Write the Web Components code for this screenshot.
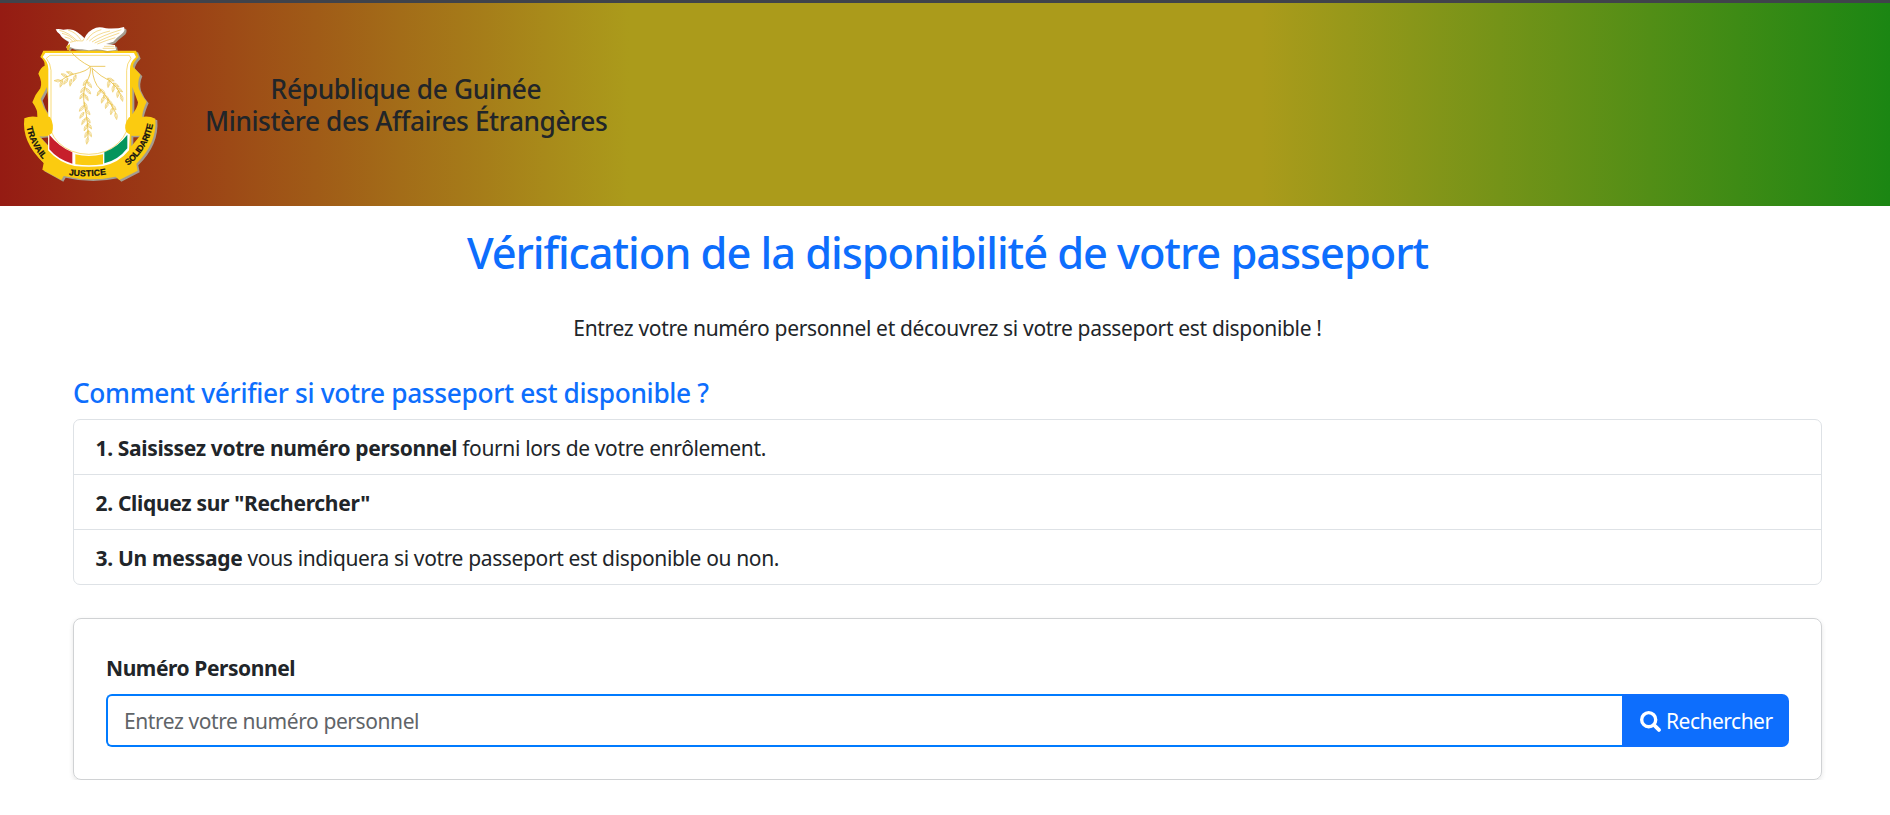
<!DOCTYPE html>
<html lang="fr">
<head>
<meta charset="utf-8">
<title>Vérification de passeport</title>
<style>
html,body{margin:0;background:#fff}
body{font-family:"Noto Sans","Open Sans",sans-serif;font-size:21px;line-height:32.4px;color:#212529}
</style>
</head>
<body>
<passport-page></passport-page>
<script>
const define = (name, html) => {
  const tpl = document.createElement('template');
  tpl.innerHTML = html;
  customElements.define(name, class extends HTMLElement {
    constructor() {
      super();
      this.attachShadow({ mode: 'open' }).appendChild(tpl.content.cloneNode(true));
    }
  });
};

/* One leaf and the sprigs built from it */
const leaf = (x, y, a, s = 1) =>
  `<path transform="translate(${x} ${y}) rotate(${a}) scale(${s})" d="M0 0Q-8 9 0 22Q8 9 0 0M0 2V18"/>`;
const leaves = [
  [220,224,110],[228,225,20],[214,238,10],[203,232,115],[204,236,35],[184,243,90],[188,242,20],
  [262,240,35],[262,246,-35],[256,262,40],[258,266,-40],[252,280,35],[254,284,-30],[252,308,-25],[252,318,40],[256,328,-40],[252,338,35],
  [258,352,-35],[256,356,30],[262,370,-35],[262,374,25],[264,392,-28],[264,394,25],[264,412,10],
  [300,268,-45],[302,270,30],[310,286,-50],[312,290,20],[322,300,-45],[324,306,20],[334,314,-40],[338,324,15],[346,338,-10],
  [322,236,-70],[328,242,10],[338,250,-60],[342,256,10],[350,264,-55],[356,272,10],[362,284,-15]
].map(l => leaf(...l)).join('');

define('guinea-emblem', `
<style>
:host{display:block;width:140px;height:165px}
svg{display:block;width:100%;height:100%;overflow:visible}
text{font:bold 26px "Liberation Sans",Arial,sans-serif;fill:#111;stroke:#111;stroke-width:.7px}
</style>
<svg viewBox="60 70 420 495" role="img" aria-label="Armoiries">
  <defs>
    <path id="rib" fill-rule="evenodd" d="M130 153H408L416 172Q398 190 399 202Q406 208 421 225Q411 248 417 268Q426 290 440 306Q432 322 424 352Q448 348 466 357Q472 430 409 492L413 513L358 541L347 531Q270 548 191 529L184 541L127 510L131 490Q64 428 73 356Q92 347 114 352Q113 330 97 308Q104 286 121 266Q128 248 115 222Q122 202 134 198Q136 184 121 172Z
      M141 262L122 298Q128 322 144 344V300ZM118 410L144 438V408ZM397 262V344Q413 324 414 308ZM394 408V440L420 408Z"/>
    <g id="bird">
      <path d="M207 126Q184 116 180 104Q170 98 167 89Q176 87 190 90Q218 86 232 98Q244 106 253 116Q264 92 288 84Q300 80 318 86Q352 88 372 82Q378 94 364 104Q348 116 340 126L318 133L345 136L348 151L322 154Q300 150 290 149Q266 154 246 149Q224 150 210 142L203 150L199 143L204 134Z"/>
    </g>
    <path id="t1" d="M80 382Q90 438 137 488"/>
    <path id="t2" d="M206 527Q264 534 330 523"/>
    <path id="t3" d="M384 498Q448 446 461 364"/>
  </defs>
  <g fill="#a59d90" transform="translate(6 5)"><use href="#rib"/><use href="#bird"/></g>
  <use href="#rib" fill="#fbcb10"/>
  <path fill="#fff" d="M136 160H402L408 172Q390 188 390 208V398L387 452Q356 490 309 499Q266 504 224 499Q178 490 144 452L145 398V208Q145 186 128 172Z"/>
  <path fill="none" stroke="#f7d45f" stroke-width="2.5" d="M150 167H388L393 176Q380 192 380 212V394Q362 434 320 454Q266 474 214 454Q168 434 153 394V212Q152 192 139 176Z"/>
  <path fill="#fbcb10" d="M112 335Q130 350 150 352Q164 376 156 400Q136 418 112 406ZM427 335Q410 352 387 353Q370 376 378 396Q400 416 427 402Z"/>
  <path fill="#c71f2b" d="M148 405Q176 440 217 458V492Q174 480 148 449Z"/>
  <path fill="#fbcb10" d="M226 464Q266 474 309 464V494Q266 500 226 494Z"/>
  <path fill="#04955c" d="M313 458Q354 442 382 405V446Q354 482 313 491Z"/>
  <g fill="none" stroke="#e9c34e" stroke-width="1.7">
    <path stroke-width="2.6" d="M207 150Q236 184 270 200H316M270 200Q266 214 218 224Q196 232 180 244M270 200Q276 220 258 250Q246 284 254 320Q264 360 264 412M276 204Q280 250 300 268Q322 290 346 338M276 206Q304 232 330 244Q352 262 362 284"/>
    ${leaves}
  </g>
  <use href="#bird" fill="#fff"/>
  <g fill="none" stroke="#ecc24c" stroke-width="1.8">
    <path d="M178 92Q206 98 232 124M186 101Q210 106 226 124M194 112Q210 114 218 124M204 91Q228 98 242 120M260 122Q276 96 304 90M268 124Q290 102 330 94M276 127Q304 108 364 90M284 130Q316 114 358 100M292 133Q318 122 346 114M312 140H343M308 146H344M210 128Q230 120 248 124M253 116L248 124"/>
  </g>
  <path fill="#e3b41c" d="M199 140L210 133V139L207 152H202ZM308 154Q322 166 338 155Z"/>
  <text><textPath href="#t1" textLength="110">TRAVAIL</textPath></text>
  <text><textPath href="#t2" textLength="113">JUSTICE</textPath></text>
  <text><textPath href="#t3" textLength="148">SOLIDARITE</textPath></text>
</svg>`);

define('site-header', `
<style>
:host{display:flex;align-items:center;box-sizing:border-box;height:206px;padding-left:20px;border-top:3px solid #40434b;
 background:linear-gradient(to right,#951b13 0%,#ab9b1b 33.3%,#ab9b1b 66.7%,#1b8613 100%)}
h5{margin:1px 0 0 45px;width:402px;text-align:center;white-space:nowrap;font-size:26.3px;line-height:32.4px;font-weight:500}
guinea-emblem{margin-top:1px}
span{display:block}
.a{letter-spacing:-.33px}.b{letter-spacing:-.43px}
</style>
<guinea-emblem></guinea-emblem>
<h5><span class="a">République de Guinée</span><span class="b">Ministère des Affaires Étrangères</span></h5>`);

define('step-list', `
<style>
:host{display:block;border:1px solid #dee2e6;border-radius:7px;overflow:hidden}
</style><slot></slot>`);

define('step-item', `
<style>
:host{display:block;box-sizing:border-box;height:55px;padding:12px 21.5px 0;border-bottom:1px solid #dee2e6;letter-spacing:-.36px;white-space:nowrap}
:host(:last-child){border-bottom:0;height:54px}
b{font-weight:700;letter-spacing:var(--lead,-.35px)}
</style><b><slot name="lead"></slot></b> <slot></slot>`);

define('search-button', `
<style>
:host{display:block;flex:none;width:167px}
button{display:flex;align-items:center;width:100%;height:100%;margin:0;padding:1px 0 0 18px;border:0;border-radius:0 7px 7px 0;background:#0d6efd;color:#fff;font:inherit;letter-spacing:-.5px}
svg{width:21px;height:21px;margin-right:5px}
</style>
<button type="button"><svg viewBox="0 0 512 512" fill="none" stroke="#fff"><circle cx="212" cy="212" r="171" stroke-width="82"/><path stroke-width="92" stroke-linecap="round" d="M345 345L462 462"/></svg><slot></slot></button>`);

define('search-card', `
<style>
:host{display:block;border:1px solid #d0d2d4;border-radius:8px;padding:32.6px 32px 32px;box-shadow:0 2px 5px rgba(0,0,0,.1)}
label{display:block;font-weight:700;letter-spacing:-.43px;margin-bottom:10px}
div{display:flex;height:53px}
input{flex:1;min-width:0;box-sizing:border-box;margin:0;padding:2px 16px 0;border:2px solid #007bff;border-right:0;border-radius:6px 0 0 6px;background:#fff;font:inherit;letter-spacing:-.42px;outline:0}
input::placeholder{color:#5f6468;opacity:1}
</style>
<label for="num">Numéro Personnel</label>
<div><input id="num" placeholder="Entrez votre numéro personnel"><search-button>Rechercher</search-button></div>`);

define('passport-page', `
<style>
:host{display:block}
main{padding:20px 68px 0 73px}
h1{margin:0 0 32px;text-align:center;font-size:43.4px;line-height:54px;font-weight:500;letter-spacing:-1.06px;color:#0d6efd}
p{margin:0 0 33px;text-align:center;letter-spacing:-.33px}
h4{margin:0 0 9.2px;font-size:26.3px;line-height:32.4px;font-weight:500;letter-spacing:-.34px;color:#0d6efd}
step-list{margin-bottom:33px}
</style>
<site-header></site-header>
<main>
<h1>Vérification de la disponibilité de votre passeport</h1>
<p>Entrez votre numéro personnel et découvrez si votre passeport est disponible !</p>
<h4>Comment vérifier si votre passeport est disponible ?</h4>
<step-list>
<step-item><span slot="lead">1. Saisissez votre numéro personnel</span>fourni lors de votre enrôlement.</step-item>
<step-item style="--lead:-.32px"><span slot="lead">2. Cliquez sur "Rechercher"</span></step-item>
<step-item style="--lead:-.3px"><span slot="lead">3. Un message</span>vous indiquera si votre passeport est disponible ou non.</step-item>
</step-list>
<search-card></search-card>
</main>`);
</script>
</body>
</html>
